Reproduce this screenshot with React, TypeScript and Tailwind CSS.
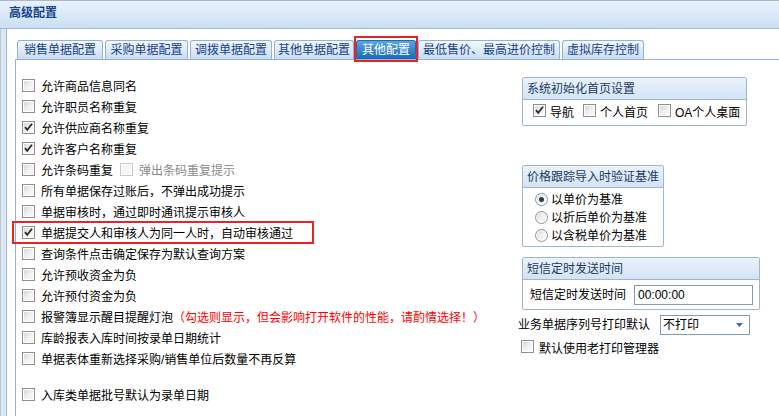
import React from "react";

const listItems: { label: string; checked?: boolean; extra?: string; gapBefore?: boolean; highlight?: boolean }[] = [
  { label: "允许商品信息同名" },
  { label: "允许职员名称重复" },
  { label: "允许供应商名称重复", checked: true },
  { label: "允许客户名称重复", checked: true },
  { label: "允许条码重复", extra: "barcode" },
  { label: "所有单据保存过账后，不弹出成功提示" },
  { label: "单据审核时，通过即时通讯提示审核人" },
  { label: "单据提交人和审核人为同一人时，自动审核通过", checked: true, highlight: true },
  { label: "查询条件点击确定保存为默认查询方案" },
  { label: "允许预收资金为负" },
  { label: "允许预付资金为负" },
  { label: "报警簿显示醒目提醒灯泡", extra: "warn" },
  { label: "库龄报表入库时间按录单日期统计" },
  { label: "单据表体重新选择采购/销售单位后数量不再反算" },
  { label: "入库类单据批号默认为录单日期", gapBefore: true },
];

const tabs = [
  { label: "销售单据配置", w: "w-[86px]" },
  { label: "采购单据配置", w: "w-[83px]" },
  { label: "调拨单据配置", w: "w-[82px]" },
  { label: "其他单据配置", w: "w-[80px]" },
  { label: "其他配置", w: "w-[60px]", active: true },
  { label: "最低售价、最高进价控制", w: "w-[142px]" },
  { label: "虚拟库存控制", w: "w-[82px]" },
];

export default function App() {
  return (
    <div className="flex h-[416px] w-[779px] flex-col overflow-hidden bg-white font-['Liberation_Sans','Noto_Sans_CJK_SC',sans-serif] text-[12px] text-black">
      {/* Title bar */}
      <div className="flex h-[29px] shrink-0 items-center border-t border-b border-t-[#a9b8c8] border-b-[#99bbe8] bg-gradient-to-b from-[#e9f2fc] to-[#cbdef3] pl-[9px] pb-[3px] font-bold text-[#15428b]">
        高级配置
      </div>

      <div className="flex flex-1">
        {/* left strip */}
        <div className="w-[6px] shrink-0 border-l border-[#b9c6d6] bg-[#dde6f1]" />

        <div className="flex flex-1 flex-col border-l border-[#99bbe8] pl-[8px] pt-[11px]">
          {/* Tabs */}
          <div className="flex gap-[2px] pl-[2px]">
            {tabs.map((t) => (
              <div key={t.label} className={`relative ${t.w}`}>
                <div
                  className={`flex h-[19px] items-center justify-center rounded-t-[3px] border border-b-0 ${
                    t.active
                      ? "border-[#2a6aa8] bg-gradient-to-b from-[#5aa6e2] to-[#1a67b2] text-white"
                      : "border-[#8fb3d9] bg-gradient-to-b from-[#f4f8fd] to-[#c9dcf2] text-[#15428b]"
                  }`}
                >
                  {t.label}
                </div>
                {t.active && (
                  <div className="absolute -left-[2px] -top-[4px] h-[26px] w-[64px] border-2 border-[#e8232a]" />
                )}
              </div>
            ))}
          </div>

          {/* Content */}
          <div className="flex flex-1 border-t border-l border-[#8fb3d9]">
            {/* Left list */}
            <div className="w-[504px] shrink-0 pl-[6px] pt-[17px]">
              {listItems.map((it) => (
                <div
                  key={it.label}
                  className={`relative flex h-[21px] items-center leading-[21px] ${it.gapBefore ? "mt-[15px]" : ""}`}
                >
                  <CheckBox checked={it.checked} />
                  <span className="ml-[6px] whitespace-nowrap">{it.label}</span>
                  {it.extra === "barcode" && (
                    <>
                      <CheckBox disabled className="ml-[7px]" />
                      <span className="ml-[6px] text-[#8a8a8a]">弹出条码重复提示</span>
                    </>
                  )}
                  {it.extra === "warn" && (
                    <span className="whitespace-nowrap text-[#ff0000]">（勾选则显示，但会影响打开软件的性能，请酌情选择！）</span>
                  )}
                  {it.highlight && (
                    <div className="absolute -left-[10px] -top-[3px] h-[23px] w-[302px] border-2 border-[#e8232a]" />
                  )}
                </div>
              ))}
            </div>

            {/* Right column */}
            <div className="flex flex-col pt-[17px]">
              {/* Group 1 */}
              <Group title="系统初始化首页设置" width="w-[225px]">
                <div className="flex h-[25px] items-center pl-[10px]">
                  <CheckBox checked />
                  <span className="ml-[4px]">导航</span>
                  <CheckBox className="ml-[9px]" />
                  <span className="ml-[4px]">个人首页</span>
                  <CheckBox className="ml-[10px]" />
                  <span className="ml-[4px]">OA个人桌面</span>
                </div>
              </Group>

              {/* Group 2 */}
              <div className="mt-[39px]">
                <Group title="价格跟踪导入时验证基准" width="w-[142px]">
                  <div className="flex flex-col pl-[12px] pt-[3px] pb-[1px]">
                    {["以单价为基准", "以折后单价为基准", "以含税单价为基准"].map((r, i) => (
                      <div key={r} className="flex h-[18px] items-center">
                        <Radio checked={i === 0} />
                        <span className="ml-[3px]">{r}</span>
                      </div>
                    ))}
                  </div>
                </Group>
              </div>

              {/* Group 3 */}
              <div className="mt-[10px]">
                <Group title="短信定时发送时间" width="w-[238px]">
                  <div className="flex h-[29px] items-start pl-[7px] pt-[5px]">
                    <span className="leading-[20px]">短信定时发送时间</span>
                    <div className="ml-[8px] flex h-[20px] w-[119px] items-center border border-[#7f9db9] bg-white pl-[3px] text-[12px]">
                      00:00:00
                    </div>
                  </div>
                </Group>
              </div>

              {/* Print default */}
              <div className="mt-[5px] flex h-[20px] items-center">
                <span className="-ml-[2px]">业务单据序列号打印默认</span>
                <div className="ml-[10px] flex h-[20px] w-[90px] items-center justify-between border border-[#7f9db9] bg-white pl-[2px] pr-[6px]">
                  <span>不打印</span>
                  <svg width="7" height="4" viewBox="0 0 7 4">
                    <path d="M0 0 H7 L3.5 4 Z" fill="#3b6fb0" />
                  </svg>
                </div>
              </div>

              <div className="mt-[3px] flex h-[21px] items-center pl-[1px]">
                <CheckBox />
                <span className="ml-[5px]">默认使用老打印管理器</span>
              </div>
            </div>
          </div>
        </div>
      </div>
    </div>
  );
}

function Group({ title, width, children }: { title: string; width: string; children: React.ReactNode }) {
  return (
    <div className={`ml-[2px] ${width} rounded-[2px] border border-[#9fb6cf] bg-white`}>
      <div className="flex h-[22px] items-center border-b border-[#9fb6cf] bg-gradient-to-b from-[#eaf2fb] to-[#d3e3f5] pl-[4px] text-[#1c3b63]">
        {title}
      </div>
      {children}
    </div>
  );
}

function CheckBox({
  checked = false,
  disabled = false,
  className = "",
}: {
  checked?: boolean;
  disabled?: boolean;
  className?: string;
}) {
  return (
    <span
      className={`relative mb-[4px] inline-flex h-[13px] w-[13px] shrink-0 border shadow-[inset_0_0_0_1px_#ffffff] ${className} ${
        disabled
          ? "border-[#c9c9c9] bg-[#f5f5f5]"
          : "border-[#8e8f8f] bg-gradient-to-br from-[#cfd3d8] via-[#eef0f2] to-[#fbfbfb]"
      }`}
    >
      {checked && (
        <svg className="absolute left-0 top-0" width="11" height="11" viewBox="0 0 11 11">
          <path d="M2 5.2 L4.2 7.8 L9 1.8" fill="none" stroke="#2b2b2b" strokeWidth="1.8" strokeLinejoin="miter" />
        </svg>
      )}
    </span>
  );
}

function Radio({ checked = false }: { checked?: boolean }) {
  return (
    <span className="relative mb-[2px] inline-flex h-[13px] w-[13px] shrink-0 items-center justify-center rounded-full border border-[#8e8f8f] bg-gradient-to-br from-[#d2d6db] via-[#eef0f2] to-white shadow-[inset_0_0_0_1px_#ffffff]">
      {checked && <span className="h-[5px] w-[5px] rounded-full bg-[#2d3a47]" />}
    </span>
  );
}
